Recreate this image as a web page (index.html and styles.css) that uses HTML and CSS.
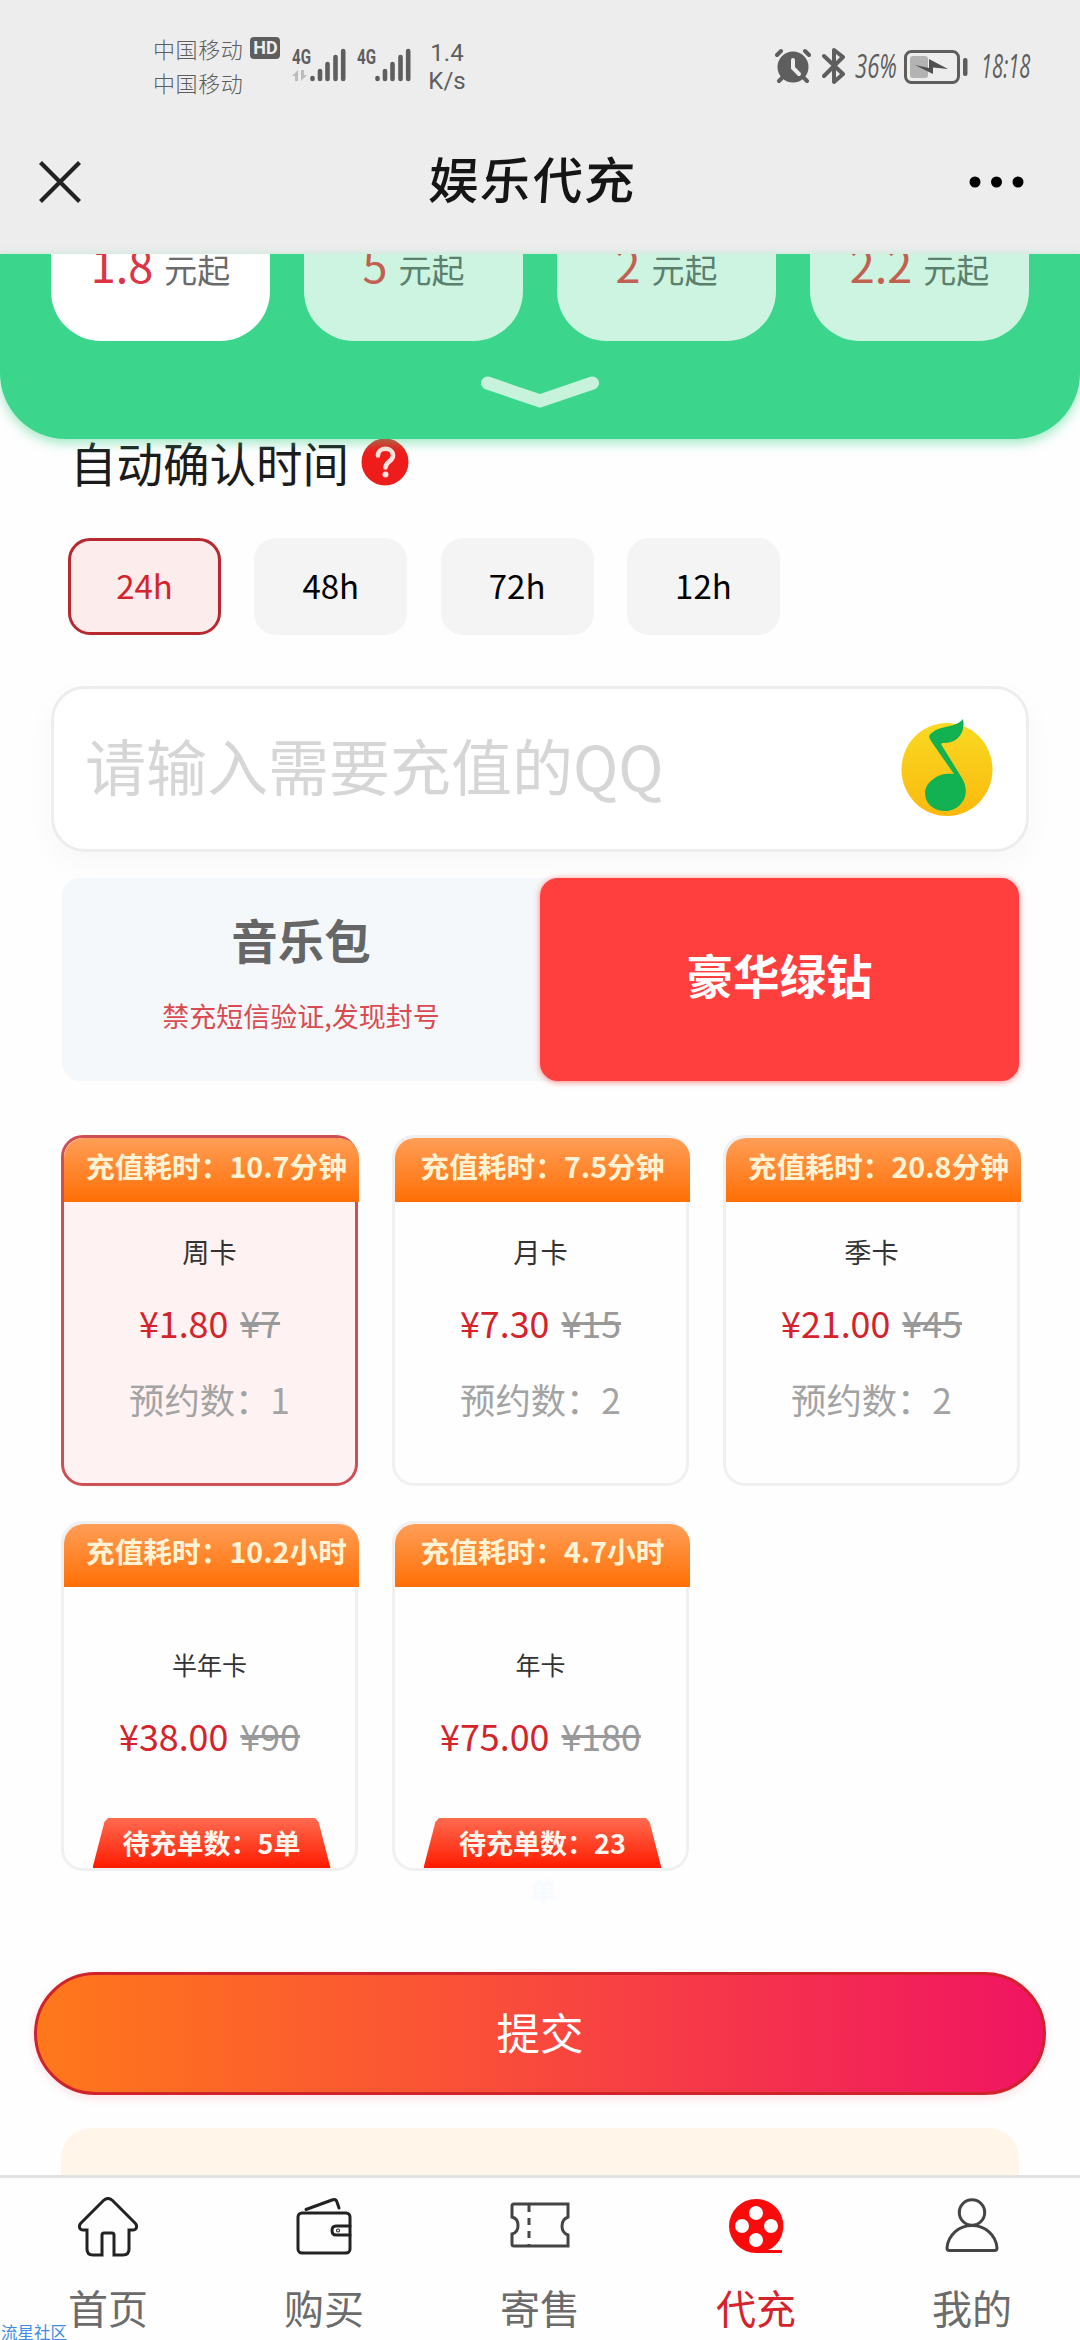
FILE: index.html
```html
<!DOCTYPE html>
<html lang="zh-CN">
<head>
<meta charset="utf-8">
<title>娱乐代充</title>
<link rel="stylesheet" href="styles.css">
</head>
<body>
<header class="top">
  <div class="status">
    <div class="carriers">
      <div class="carrier">中国移动<span class="hd">HD</span></div>
      <div class="carrier">中国移动</div>
    </div>
    <svg class="signal" width="54" height="36" viewBox="0 0 54 36">
      <text class="gen" x="0" y="17" textLength="19" lengthAdjust="spacingAndGlyphs">4G</text>
      <path d="M0 29l6-6v11H3v-5zM15 28l-6 6V23h3v5z" fill="#bdbdbd"/>
      <path d="M20.500 31v1M28 24v8M35.500 17v15M43.500 10v22M51.200 4v28" class="bars"/>
    </svg>
    <svg class="signal second" width="54" height="36" viewBox="0 0 54 36">
      <text class="gen" x="0" y="17" textLength="19" lengthAdjust="spacingAndGlyphs">4G</text>
      <path d="M20.500 31v1M28 24v8M35.500 17v15M43.500 10v22M51.200 4v28" class="bars"/>
    </svg>
    <div class="speed"><span>1.4</span><span>K/s</span></div>
    <svg class="alarm" width="36" height="36" viewBox="0 0 36 36">
      <circle cx="18" cy="19" r="15.500" fill="#5e5e5e"/>
      <path d="M2 7l4-4M34 7l-4-4M7 30l-3 3M29 30l3 3" stroke="#5e5e5e" stroke-width="4" stroke-linecap="round"/>
      <path d="M18 12v8l6 6" fill="none" stroke="#ededed" stroke-width="4" stroke-linecap="round"/>
    </svg>
    <svg class="bt" width="24" height="38" viewBox="0 0 24 38">
      <path d="M2 9l19 18-9 8V3l9 7L2 29" fill="none" stroke="#5e5e5e" stroke-width="4" stroke-linejoin="round" stroke-linecap="round"/>
    </svg>
    <span class="pct">36%</span>
    <svg class="battery" width="64" height="34" viewBox="0 0 64 34">
      <rect x="1.500" y="1.500" width="53" height="31" rx="6" fill="none" stroke="#5e5e5e" stroke-width="3"/>
      <rect x="6" y="6" width="18" height="22" rx="3" fill="#b3b3b3"/>
      <path d="M11 15l14 3V9l19 10-15-1.500v6.500z" fill="#505050"/>
      <rect x="59" y="8" width="4.500" height="18" rx="2" fill="#5e5e5e"/>
    </svg>
    <span class="clock">18:18</span>
  </div>
  <div class="titlebar">
    <svg width="42" height="42" viewBox="0 0 42 42"><path d="M1.500 1.500l39 39M40.500 1.500l-39 39" stroke="#222" stroke-width="4.200"/></svg>
    <h1>娱乐代充</h1>
    <svg width="56" height="12" viewBox="0 0 56 12"><circle cx="6" cy="6" r="5.500"/><circle cx="27.500" cy="6" r="5.500"/><circle cx="49" cy="6" r="5.500"/></svg>
  </div>
</header>

<section class="hero">
  <div class="offers">
    <div class="offer active"><b>1.8</b><span>元起</span></div>
    <div class="offer"><b>5</b><span>元起</span></div>
    <div class="offer"><b>2</b><span>元起</span></div>
    <div class="offer"><b>2.2</b><span>元起</span></div>
  </div>
  <svg class="expand" width="120" height="34" viewBox="0 0 120 34"><path d="M7.500 7L60 25 112.500 7" fill="none" stroke="#c7f3dc" stroke-width="13" stroke-linecap="round" stroke-linejoin="miter"/></svg>
</section>

<main>
  <div class="confirm">
    <h2>自动确认时间</h2>
    <svg width="48" height="48" viewBox="0 0 48 48"><circle cx="24" cy="24" r="23.500" fill="#ef1c1c"/><path d="M17 17.500c0-9 15-9 15 0 0 6-7.500 6-7.500 12" fill="none" stroke="#ffe3e0" stroke-width="4.600" stroke-linecap="round"/><circle cx="24.500" cy="36.500" r="3" fill="#ffe3e0"/></svg>
  </div>
  <div class="hours">
    <button class="hour active">24h</button>
    <button class="hour">48h</button>
    <button class="hour">72h</button>
    <button class="hour">12h</button>
  </div>

  <div class="account">
    <span>请输入需要充值的QQ</span>
    <svg width="92" height="98" viewBox="0 0 92 98">
      <defs><linearGradient id="sun" x1="0" y1="0" x2="0" y2="1"><stop offset="0" stop-color="#f9d923"/><stop offset="1" stop-color="#fcb90d"/></linearGradient></defs>
      <ellipse cx="46" cy="50.500" rx="45.500" ry="46.500" fill="url(#sun)"/>
      <path d="M62 0c3 15-7 25-21 24l-.8 1.500L61 59c11 19-4 34-18 33-19-1-25-21-12-31 7-6 14-7 22-6L30 22c-3-5-2-6 2-9C41 6 55 9 62 0z" fill="#12b152"/>
    </svg>
  </div>

  <div class="tabs">
    <div class="tab"><strong>音乐包</strong><small>禁充短信验证,发现封号</small></div>
    <div class="tab active"><strong>豪华绿钻</strong></div>
  </div>

  <div class="plans">
    <article class="plan active">
      <div class="eta">充值耗时：10.7分钟</div>
      <h3>周卡</h3><p class="price">¥1.80<del>¥7</del></p><p class="booked">预约数：1</p>
    </article>
    <article class="plan">
      <div class="eta">充值耗时：7.5分钟</div>
      <h3>月卡</h3><p class="price">¥7.30<del>¥15</del></p><p class="booked">预约数：2</p>
    </article>
    <article class="plan">
      <div class="eta">充值耗时：20.8分钟</div>
      <h3>季卡</h3><p class="price">¥21.00<del>¥45</del></p><p class="booked">预约数：2</p>
    </article>
    <article class="plan low">
      <div class="eta">充值耗时：10.2小时</div>
      <h3>半年卡</h3><p class="price">¥38.00<del>¥90</del></p>
      <div class="queue">待充单数：5单</div>
    </article>
    <article class="plan low">
      <div class="eta">充值耗时：4.7小时</div>
      <h3>年卡</h3><p class="price">¥75.00<del>¥180</del></p>
      <div class="queue">待充单数：23</div>
      <span class="spill">单</span>
    </article>
  </div>

  <button class="submit">提交</button>
  <div class="notice"></div>
</main>

<nav class="nav">
  <a><svg width="60" height="60" viewBox="0 0 60 60"><path d="M25.500 3.500q4.500-4 9 0L57 26c3 3 1.500 7-2 7h-4v19q0 6-6 6h-9V38q0-2-2-2h-8q-2 0-2 2v20h-9q-6 0-6-6V33H5c-3.500 0-5-4-2-7z"/></svg>首页</a>
  <a><svg width="60" height="60" viewBox="0 0 60 60"><rect x="4" y="16" width="52" height="40" rx="4"/><path d="M12 12.500L38 3q4-1.500 5 2l2 6M56 29H42q-4 0-4 4.500t4 4.500h14"/><circle cx="44" cy="33.500" r=".5"/></svg>购买</a>
  <a><svg class="grey" width="60" height="60" viewBox="0 0 60 60"><path d="M2 9q0-2 2-2h54v13c-8 3-8 15 0 18v11H4q-2 0-2-2V37c8-2 8-15 0-17z"/><path d="M19 8v42" stroke-dasharray="7 6"/></svg>寄售</a>
  <a class="active"><svg width="60" height="60" viewBox="0 0 60 60"><path class="reel" fill-rule="evenodd" d="M30 2a27 27 0 0 1 16 49l-4 2h14v3H30a27 27 0 0 1 0-54zM30 9a7 7 0 1 0 0 14 7 7 0 1 0 0-14zM16 22a7 7 0 1 0 0 14 7 7 0 1 0 0-14zM45 22a7 7 0 1 0 0 14 7 7 0 1 0 0-14zM30 36a7 7 0 1 0 0 14 7 7 0 1 0 0-14z"/></svg>代充</a>
  <a><svg class="grey" width="60" height="60" viewBox="0 0 60 60"><circle cx="30" cy="15.500" r="12.700"/><path d="M30 28.500C17 28.500 6 38 5 51q0 2.500 2.500 2.500h45Q55 53.500 55 51C54 38 43 28.500 30 28.500z"/></svg>我的</a>
</nav>
<div class="mark">流星社区</div>
</body>
</html>
```
FILE: styles.css
```css
* { box-sizing: border-box; margin: 0; padding: 0; }
html, body { width: 1080px; height: 2340px; overflow: hidden; }
body {
  position: relative;
  display: flex;
  flex-direction: column;
  background: #fefefe;
  color: #1b1b1b;
  font-family: "Noto Sans CJK SC", sans-serif;
}
svg { display: block; flex: none; }
button { border: 0; font-family: inherit; }

.top { flex: none; height: 254px; background: #ededed; }
.status {
  display: flex;
  align-items: flex-start;
  height: 120px;
  padding: 33px 0 0 153px;
  color: #5e5e5e;
}
.carriers { width: 139px; }
.carrier {
  display: flex;
  align-items: center;
  height: 34px;
  font-size: 22px;
  font-weight: 300;
  line-height: 30px;
  letter-spacing: .6px;
  padding-bottom: 4px;
}
.hd {
  width: 30px;
  height: 22px;
  margin-left: 7px;
  border-radius: 4px;
  background: #5e5e5e;
  color: #ededed;
  font: bold 18px/22px Roboto, sans-serif;
  letter-spacing: 0;
  text-align: center;
}
.signal { margin-top: 14px; }
.signal.second { margin-left: 11px; }
.gen { font: bold 21px Roboto, sans-serif; fill: #5e5e5e; }
.bars { stroke: #5e5e5e; stroke-width: 4.600px; stroke-linecap: round; fill: none; }
.speed {
  display: flex;
  flex-direction: column;
  align-items: center;
  width: 36px;
  margin: 6px 0 0 18px;
  font: 24px/28px Roboto, sans-serif;
}
.alarm { margin: 15px 0 0 310px; }
.bt { margin: 14px 0 0 11px; }
.pct, .clock {
  margin-top: 15px;
  font: italic 400 32px/36px "Open Sans", sans-serif;
  transform: scaleX(.69);
  transform-origin: 0 50%;
  white-space: nowrap;
}
.pct { width: 41px; margin-left: 9px; }
.battery { margin: 17px 0 0 8px; }
.clock { width: 60px; margin-left: 13px; transform: scaleX(.63); }

.titlebar {
  display: flex;
  align-items: center;
  justify-content: space-between;
  height: 124px;
  padding: 0 55px 0 39px;
  color: #151515;
}
.titlebar h1 { margin-left: 15px; font-size: 50px; line-height: 60px; letter-spacing: 2px; font-weight: 500; transform: translateY(-5px) skewX(-4deg); }

.hero {
  position: relative;
  z-index: 1;
  flex: none;
  display: flex;
  flex-direction: column;
  align-items: center;
  height: 185px;
  border-radius: 0 0 66px 66px;
  background: #3bd68b;
  box-shadow: 0 4px 12px rgba(59, 214, 139, .5);
}
.offers { display: flex; gap: 34px; height: 87px; overflow: hidden; }
.offer {
  display: flex;
  align-items: baseline;
  justify-content: center;
  gap: 11px;
  width: 219px;
  height: 87px;
  border-radius: 0 0 50px 50px;
  background: #cdf4e1;
  color: #5b806e;
  line-height: 20px;
  font-size: 33px;
}
.offer b { font-size: 45px; font-weight: 400; line-height: 20px; color: #c16151; }
.offer.active { background: #fff; color: #6b6b6b; }
.offer.active b { color: #dc3545; }
.expand { margin-top: 35px; }

main { flex: none; height: 1736px; overflow: hidden; }
.confirm { display: flex; align-items: center; gap: 12px; height: 48px; margin: -1px 0 0 70px; }
.confirm h2 { font-size: 46.500px; line-height: 46px; font-weight: 400; }
.hours { display: flex; gap: 34px; margin: 52px 0 0 68px; }
.hour {
  width: 153px;
  height: 97px;
  margin-right: -.7px;
  border-radius: 22px;
  background: #f4f4f4;
  font-size: 33px;
  line-height: 91px;
  padding-bottom: 3px;
  color: #000;
}
.hour.active { border: 3px solid #b7282f; background: #fceceb; color: #d4232b; line-height: 85px; }

.account {
  display: flex;
  align-items: center;
  justify-content: space-between;
  width: 978px;
  height: 166px;
  margin: 51px 0 0 51px;
  padding: 0 33px 3px 31px;
  border: 3px solid #ededed;
  border-radius: 34px;
  background: #fff;
  box-shadow: 0 10px 32px rgba(0, 0, 0, .03);
  color: #d6d6d6;
  font-size: 61px;
  line-height: 80px;
}
.account span { transform: translateY(-3px); }
.tabs {
  position: relative;
  display: flex;
  width: 957px;
  height: 203px;
  margin: 26px 0 0 62px;
  border-radius: 18px;
  background: #f4f8fb;
}
.tab {
  display: flex;
  flex-direction: column;
  align-items: center;
  width: 478px;
  padding-top: 27px;
  color: #666;
}
.tab strong { font-size: 46.500px; line-height: 68px; }
.tab small { margin-top: 23px; font-size: 27px; line-height: 40px; color: #d94b50; }
.tab.active {
  justify-content: center;
  padding: 0 0 11px;
  width: 479px;
  border-radius: 18px;
  background: #ff3e3e;
  box-shadow: 0 1px 6px rgba(255, 62, 62, .65);
  color: #fff;
}

.plans {
  display: grid;
  grid-template-columns: repeat(3, 297px);
  grid-template-rows: 351px 350px;
  gap: 35px 34px;
  margin: 54px 0 0 61px;
}
.plan {
  position: relative;
  display: flex;
  flex-direction: column;
  align-items: center;
  border: 3px solid #f0f0f0;
  border-radius: 22px;
}
.plan.active { border-color: #cf4f56; background: #fef3f2; }
.eta {
  width: 295px;
  height: 64px;
  flex: none;
  padding: 0 22px;
  margin-right: -4px;
  border-radius: 20px 20px 0 0;
  background: linear-gradient(#ff9e57, #ff6f05);
  color: #fff3d6;
  font-size: 28.700px;
  font-weight: 700;
  line-height: 56px;
  white-space: nowrap;
  text-align: center;
}
.plan h3 { margin-top: 29px; font-size: 27.200px; line-height: 40px; font-weight: 400; color: #333; }
.price { margin-top: 26px; font-size: 35.800px; line-height: 50px; color: #d4232b; }
.price del { margin-left: 12px; color: #999; }
.booked { margin-top: 27px; font-size: 35.300px; line-height: 50px; color: #a3a3a3; }
.low .eta { height: 63px; line-height: 54px; }
.low h3 { margin-top: 57px; font-size: 25px; }
.queue {
  width: 238px;
  height: 50px;
  margin: auto -4px 0 0;
  clip-path: polygon(6.500% 0, 93.500% 0, 95% 8%, 100% 100%, 0 100%, 5% 8%);
  background: linear-gradient(#ff6b50, #ff1b00);
  color: #fff6ee;
  font-size: 27px;
  font-weight: 700;
  line-height: 50px;
  text-align: center;
}
.spill { position: absolute; top: 348px; left: 135px; font-size: 26px; line-height: 36px; font-weight: 700; color: #f7fafe; }

.submit {
  display: block;
  width: 1012px;
  height: 123px;
  margin: 101px 0 0 34px;
  padding-bottom: 5px;
  border: 3px solid #d0222b;
  border-radius: 62px;
  background: linear-gradient(90deg, #ff781a, #f94a3c 49%, #f01462);
  box-shadow: 0 3px 10px rgba(240, 40, 70, .15);
  color: #fff;
  font-size: 43.500px;
}
.notice { width: 958px; height: 60px; margin: 33px 0 0 61px; border-radius: 30px 30px 0 0; background: #fff5e9; }

.nav {
  position: relative;
  display: flex;
  flex: none;
  height: 165px;
  border-top: 3px solid #e3e3e3;
  background: #fefefe;
}
.nav a {
  display: flex;
  flex-direction: column;
  align-items: center;
  width: 216px;
  padding-top: 19px;
  color: #6b6b6b;
  font-size: 40px;
  line-height: 60px;
}
.nav svg { margin-bottom: 20px; fill: none; stroke: #222; stroke-width: 3px; stroke-linecap: round; }
.nav svg.grey { stroke: #444; stroke-linecap: butt; }
.nav .active { color: #d4232b; }
.nav .reel { fill: #f90b0b; stroke: none; }
.mark { position: absolute; left: 1px; bottom: -4px; font-size: 16.500px; line-height: 24px; color: #3d8ce8; }
```
